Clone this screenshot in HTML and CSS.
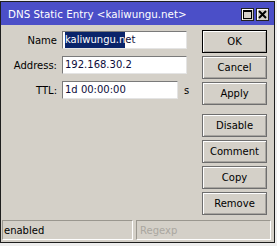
FILE: index.html
```html
<!DOCTYPE html>
<html>
<head>
<meta charset="utf-8">
<link rel="stylesheet" href="styles.css">
</head>
<body>
<div class="win">
  <div class="title">
    <span class="ttext">DNS Static Entry &lt;kaliwungu.net&gt;</span>
    <div class="tbtns">
      <span class="tb"><svg width="11" height="11" viewBox="0 0 11 11"><rect x="1.5" y="1.5" width="8" height="8" fill="none" stroke="#000" stroke-width="1"/><rect x="1" y="1" width="9" height="2" fill="#000"/></svg></span>
      <span class="tb"><svg width="11" height="11" viewBox="0 0 11 11"><path d="M2 2 L9 9 M9 2 L2 9" stroke="#000" stroke-width="2"/></svg></span>
    </div>
  </div>
  <div class="body">
    <div class="form">
      <div class="row"><span class="lbl">Name</span><div class="field"><span class="sel">kaliwungu.n</span>et</div></div>
      <div class="row"><span class="lbl">Address:</span><div class="field">192.168.30.2</div></div>
      <div class="row"><span class="lbl">TTL:</span><div class="field short">1d 00:00:00</div><span class="unit">s</span></div>
    </div>
    <div class="btns">
      <div class="btn def">OK</div>
      <div class="btn">Cancel</div>
      <div class="btn">Apply</div>
      <div class="btn sep">Disable</div>
      <div class="btn">Comment</div>
      <div class="btn">Copy</div>
      <div class="btn">Remove</div>
    </div>
  </div>
  <div class="status">
    <div class="panel">enabled</div>
    <div class="panel dim">Regexp</div>
  </div>
</div>
</body>
</html>
```
FILE: styles.css
```css
html, body {
  margin: 0;
  padding: 0;
  background: #eeeeee;
}
body {
  width: 277px;
  height: 246px;
  overflow: hidden;
  font-family: "DejaVu Sans", sans-serif;
  font-size: 10px;
  color: #000;
}
.win {
  margin-top: 1px;
  width: 273px;
  height: 240px;
  border: 1px solid #1e1e1e;
  background: #d4d0c8;
  display: flex;
  flex-direction: column;
}
.title {
  height: 23px;
  background: #4b4fc8;
  display: flex;
  align-items: center;
  padding-left: 7px;
  padding-right: 5px;
}
.ttext {
  color: #fff;
  font-size: 10.3px;
  flex: 1;
  white-space: nowrap;
}
.tbtns {
  display: flex;
  gap: 2px;
  margin-top: 1px;
}
.tb {
  width: 11px;
  height: 11px;
  border: 1px solid #222;
  background: #d4d0c8;
  box-shadow: inset 1px 1px #fff;
  display: flex;
}
.body {
  flex: 1;
  display: flex;
  padding-right: 7px;
}
.form {
  flex: 1;
  padding-top: 6px;
  display: flex;
  flex-direction: column;
  gap: 7px;
}
.row {
  display: flex;
  align-items: center;
  height: 18px;
}
.lbl {
  width: 56px;
  text-align: right;
  margin-right: 5px;
  white-space: nowrap;
}
.field {
  box-sizing: border-box;
  width: 125px;
  height: 18px;
  background: #fff;
  border: 1px solid;
  border-color: #7a7a7a #e4e4e4 #e4e4e4 #7a7a7a;
  color: #0c0c3a;
  padding-left: 2px;
  line-height: 16px;
  white-space: nowrap;
  overflow: hidden;
}
.field.short {
  width: 116px;
}
.sel {
  background: #0a246a;
  color: #fff;
  display: inline-block;
  height: 16px;
}
.unit {
  margin-left: 6px;
}
.btns {
  width: 65px;
  padding-top: 5px;
  display: flex;
  flex-direction: column;
  gap: 3px;
}
.btn {
  box-sizing: border-box;
  height: 23px;
  border: 1px solid #6e6e6e;
  box-shadow: inset 1px 1px #ffffff, inset -1px -1px #a8a5a0;
  display: flex;
  align-items: center;
  justify-content: center;
}
.btn.def {
  border-color: #000;
}
.btn.sep {
  margin-top: 6px;
}
.status {
  display: flex;
  gap: 3px;
  padding: 0 3px 2px 1px;
}
.panel {
  box-sizing: border-box;
  height: 20px;
  flex: 132;
  border: 1px solid;
  border-color: #9a978f #ffffff #ffffff #9a978f;
  display: flex;
  align-items: center;
  padding-left: 1px;
}
.panel.dim {
  flex: 134;
  color: #aaa7a0;
  padding-left: 3px;
}
```
